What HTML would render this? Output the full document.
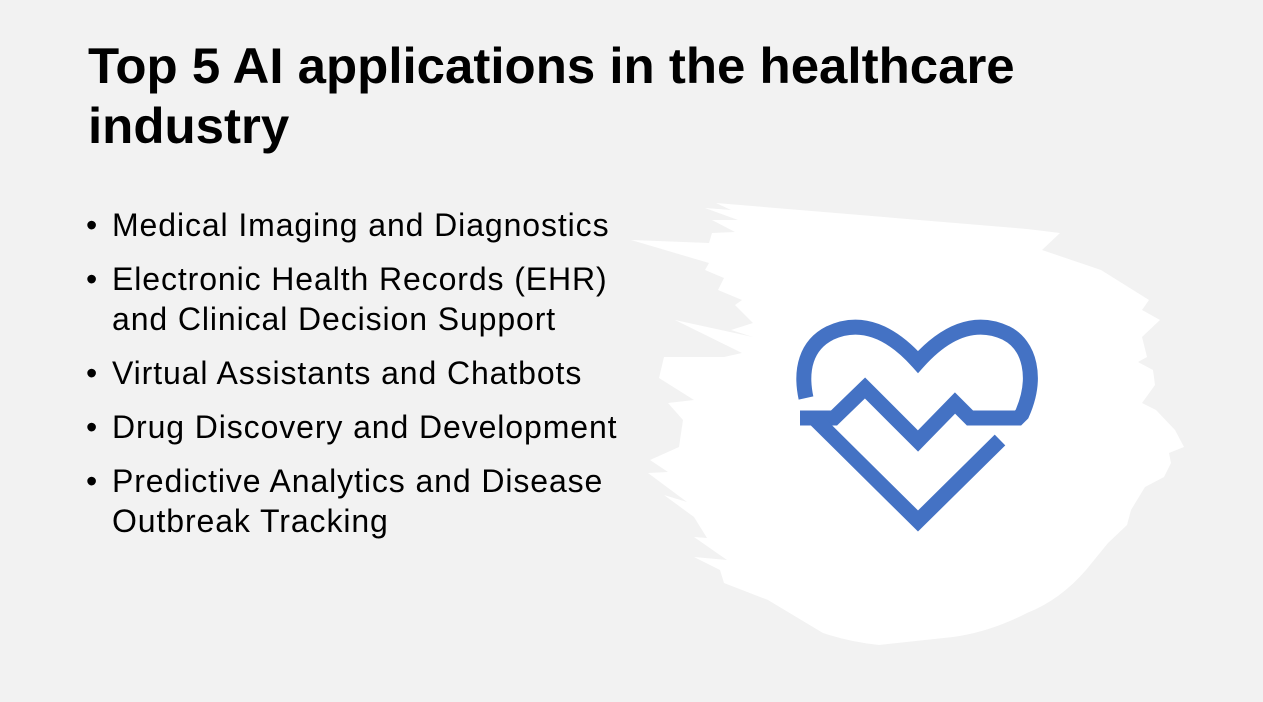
<!DOCTYPE html>
<html><head><meta charset="utf-8"><style>
html,body{margin:0;padding:0}
body{width:1263px;height:702px;background:#f2f2f2;position:relative;overflow:hidden;font-family:"Liberation Sans",sans-serif;color:#000}
.t{position:absolute;left:88px;font-weight:bold;font-size:50px;line-height:60px;white-space:nowrap;transform:scaleX(1.02);transform-origin:left top}
ul{position:absolute;left:86px;top:205px;margin:0;padding:0;list-style:none;font-size:32px;line-height:40px;letter-spacing:0.9px}
li{position:relative;padding-left:26px;margin-bottom:14px;white-space:nowrap}
li:before{content:"•";position:absolute;left:0;top:0}
svg{position:absolute;left:0;top:0}
</style></head><body>
<div class="t" style="top:36px">Top 5 AI applications in the healthcare</div>
<div class="t" style="top:96px">industry</div>
<ul>
<li>Medical Imaging and Diagnostics</li>
<li>Electronic Health Records (EHR)<br>and Clinical Decision Support</li>
<li>Virtual Assistants and Chatbots</li>
<li>Drug Discovery and Development</li>
<li>Predictive Analytics and Disease<br>Outbreak Tracking</li>
</ul>
<svg width="1263" height="702">
<path fill="#fff" d="M716,203 L1027,229 L1060,233 L1042,250 L1101,270 L1149,300 L1142,310 L1160,320 L1142,337 L1147,357 L1138,362 L1153,370 L1155,385 L1142,403 L1156,410 L1175,430 L1184,447 L1169,453 L1171,463 L1164,477 L1145,487 L1131,510 L1127,525 L1108,543 L1086,570 Q1060,600 1027,613 Q990,632 953,637 L879,645 Q850,642 823,633 L768,600 L724,583 L720,570 L694,557 L727,560 L694,537 L707,538 L694,517 L664,495 L687,502 L648,473 L668,472 L650,460 L679,447 L683,420 L668,403 L694,400 L659,378 L664,357 L724,357 L742,353 L675,320 L753,337 L731,330 L753,323 L735,305 L742,300 L718,290 L724,278 L705,270 L709,263 L631,240 L709,243 L712,233 L735,232 L712,220 L738,220 L705,208 L731,210 Z"/>
<g fill="none" stroke="#4472c4" stroke-width="15" stroke-linejoin="miter">
<path d="M806,398 C800,370 806,345 830,333 C862,318 892,333 918,362 C944,333 974,318 1006,333 C1030,345 1038,378 1022,414 L1018,418 L970,418 L955,403 L918,441 L865,388 L834,418 L800,418"/>
<path d="M816,420 L918,521 L1000,440"/>
</g>
</svg>
</body></html>
